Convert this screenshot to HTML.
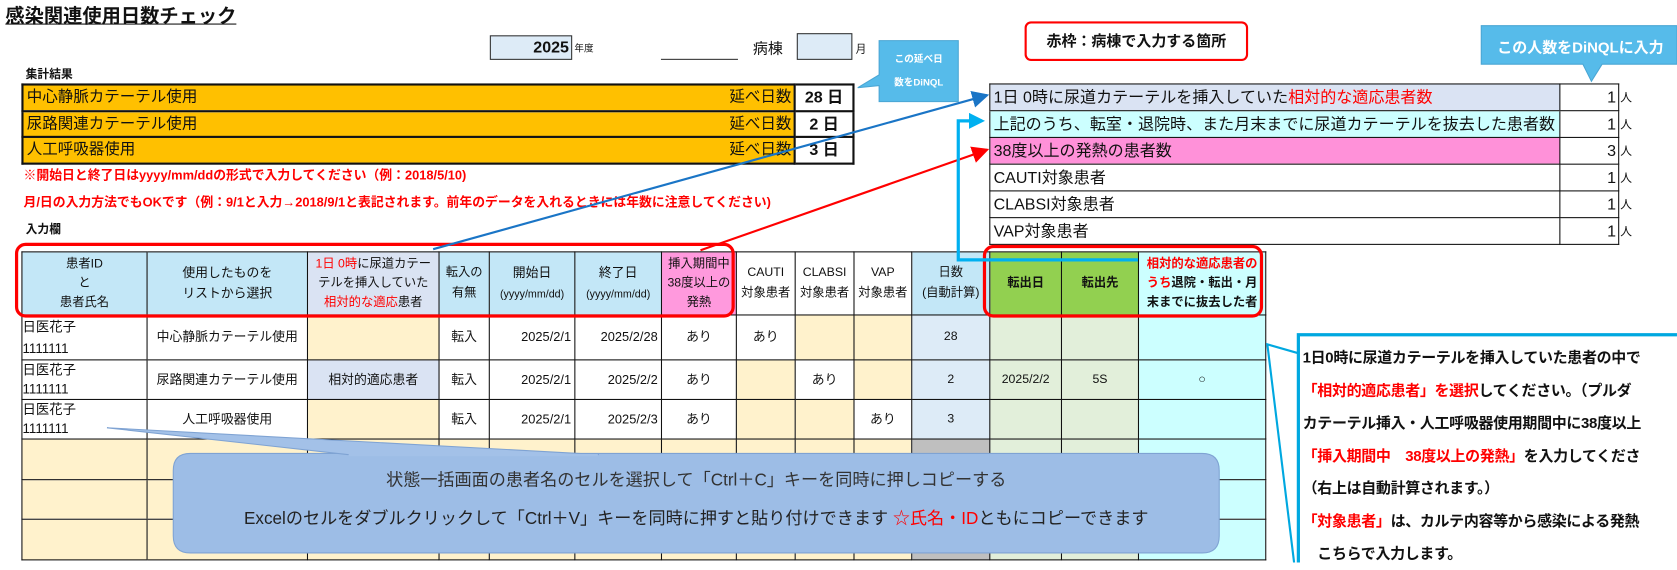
<!DOCTYPE html>
<html><head><meta charset="utf-8">
<style>
*{margin:0;padding:0;box-sizing:border-box}
html,body{width:1677px;height:562px;overflow:hidden;background:#fff}
#w{position:absolute;left:0;top:0;width:1568px;height:526px;transform:scale(1.0695);transform-origin:0 0;font-family:"Liberation Sans","Noto Sans CJK JP",sans-serif;color:#111}
.a{position:absolute;white-space:nowrap}
.r{color:#f00}
table{border-collapse:collapse;position:absolute;table-layout:fixed}
td{border:1px solid #111;text-align:center;vertical-align:middle;font-size:11.5px;line-height:19px;overflow:hidden;white-space:nowrap;padding:0}
.hb{background:#c3e7f7}.lv{background:#dae3f3}.pk{background:#ff99dd}.bg{background:#fff2cc}.lb{background:#ddebf7}.gr{background:#bfbfbf}.gn{background:#92d050;font-weight:bold}.lg{background:#e2efda}.cy{background:#ccffff}
.sum td{font-size:15px;text-align:left;padding-left:3px;height:25px}
.nm{text-align:left;border-right:1px dotted #111 !important;font-size:12.5px}
</style></head><body><div id="w">
<div class="a" style="left:5px;top:1px;font-size:18px;font-weight:bold;text-decoration:underline">感染関連使用日数チェック</div>
<div class="a" style="left:458px;top:33px;width:77px;height:23px;background:#ddebf7;border:1px solid #333;font-size:15px;font-weight:bold;text-align:right;padding-right:2px;line-height:21px">2025</div>
<div class="a" style="left:537px;top:38px;font-size:9px">年度</div>
<div class="a" style="left:618px;top:55px;width:72px;border-top:1px solid #333"></div>
<div class="a" style="left:704px;top:35px;font-size:14px">病棟</div>
<div class="a" style="left:745px;top:31px;width:52px;height:25px;background:#ddebf7;border:1px solid #333"></div>
<div class="a" style="left:800px;top:37px;font-size:10px">月</div>
<svg class="a" style="left:790px;top:30px" width="120" height="70"><polygon points="32,8 106,8 106,65 32,65 32,50 12,52 32,40" fill="#56bbea" stroke="#4aa6d4"/><text x="69" y="28" font-size="9" fill="#fff" font-weight="bold" text-anchor="middle" font-family="Liberation Sans,Noto Sans CJK JP,sans-serif">この延べ日</text><text x="69" y="50" font-size="9" fill="#fff" font-weight="bold" text-anchor="middle" font-family="Liberation Sans,Noto Sans CJK JP,sans-serif">数をDiNQL</text></svg>
<div class="a" style="left:24px;top:61px;font-size:11px;font-weight:bold">集計結果</div>
<table style="left:20px;top:78px;width:777px;border:2px solid #111">
<colgroup><col style="width:722px"><col style="width:55px"></colgroup>
<tr><td style="background:#ffc000;text-align:left;padding-left:3px;font-size:14.5px;height:25px;border:2px solid #111">中心静脈カテーテル使用<span style="float:right;padding-right:2px">延べ日数</span></td><td style="font-size:15px;font-weight:bold;border:2px solid #111">28 日</td></tr>
<tr><td style="background:#ffc000;text-align:left;padding-left:3px;font-size:14.5px;height:24px;border:2px solid #111">尿路関連カテーテル使用<span style="float:right;padding-right:2px">延べ日数</span></td><td style="font-size:15px;font-weight:bold;border:2px solid #111">2 日</td></tr>
<tr><td style="background:#ffc000;text-align:left;padding-left:3px;font-size:14.5px;height:25px;border:2px solid #111">人工呼吸器使用<span style="float:right;padding-right:2px">延べ日数</span></td><td style="font-size:15px;font-weight:bold;border:2px solid #111">3 日</td></tr>
</table>
<div class="a r" style="left:22px;top:155px;font-size:12px;font-weight:bold">※開始日と終了日はyyyy/mm/ddの形式で入力してください（例：2018/5/10)</div>
<div class="a r" style="left:22px;top:180px;font-size:12px;font-weight:bold">月/日の入力方法でもOKです（例：9/1と入力→2018/9/1と表記されます。前年のデータを入れるときには年数に注意してください)</div>
<div class="a" style="left:24px;top:206px;font-size:11px;font-weight:bold">入力欄</div>

<div class="a" style="left:958px;top:20px;width:209px;height:37px;border:2px solid #f00;border-radius:6px;font-size:14px;font-weight:bold;text-align:center;line-height:33px">赤枠：病棟で入力する箇所</div>
<svg class="a" style="left:1380px;top:20px" width="188" height="60"><polygon points="5,4 188,4 188,40 118,40 108,56 100,40 5,40" fill="#56bbea" stroke="#4aa6d4"/><text x="20" y="29" font-size="14" fill="#fff" font-weight="bold" font-family="Liberation Sans,Noto Sans CJK JP,sans-serif">この人数をDiNQLに入力</text></svg>

<table class="sum" style="left:925px;top:78px;width:588px">
<colgroup><col style="width:533px"><col style="width:55px"></colgroup>
<tr><td class="lv" style="border-bottom:1px dotted #111">1日 0時に尿道カテーテルを挿入していた<span class="r">相対的な適応患者数</span></td><td style="text-align:right;padding-right:2px">1</td></tr>
<tr><td class="cy">上記のうち、転室・退院時、また月末までに尿道カテーテルを抜去した患者数</td><td style="text-align:right;padding-right:2px">1</td></tr>
<tr><td style="background:#ff91d9">38度以上の発熱の患者数</td><td style="text-align:right;padding-right:2px">3</td></tr>
<tr><td>CAUTI対象患者</td><td style="text-align:right;padding-right:2px">1</td></tr>
<tr><td>CLABSI対象患者</td><td style="text-align:right;padding-right:2px">1</td></tr>
<tr><td>VAP対象患者</td><td style="text-align:right;padding-right:2px">1</td></tr>
</table>
<div class="a" style="left:1515px;top:80px;font-size:11px;line-height:25px">人<br>人<br>人<br>人<br>人<br>人</div>

<table style="left:20px;top:235px;width:1163px">
<colgroup><col style="width:117px"><col style="width:150px"><col style="width:123px"><col style="width:47px"><col style="width:80px"><col style="width:81px"><col style="width:70px"><col style="width:55px"><col style="width:55px"><col style="width:54px"><col style="width:73px"><col style="width:67px"><col style="width:72px"><col style="width:119px"></colgroup>
<tr style="height:59px">
<td class="hb" style="border-right:1px dotted #111;line-height:18px">患者ID<br>と<br>患者氏名</td>
<td class="hb" style="font-size:12px">使用したものを<br>リストから選択</td>
<td class="lv" style="line-height:18px"><span class="r">1日 0時</span>に尿道カテー<br>テルを挿入していた<br><span class="r">相対的な適応</span>患者</td>
<td class="hb">転入の<br>有無</td>
<td class="hb" style="font-size:10px"><span style="font-size:12px">開始日</span><br>(yyyy/mm/dd)</td>
<td class="hb" style="font-size:10px"><span style="font-size:12px">終了日</span><br>(yyyy/mm/dd)</td>
<td class="pk" style="line-height:18px">挿入期間中<br>38度以上の<br>発熱</td>
<td>CAUTI<br>対象患者</td>
<td>CLABSI<br>対象患者</td>
<td>VAP<br>対象患者</td>
<td class="hb">日数<br>(自動計算)</td>
<td class="gn">転出日</td>
<td class="gn">転出先</td>
<td class="cy" style="font-weight:bold;line-height:18px"><span class="r">相対的な適応患者の<br>うち</span>退院・転出・月<br>末までに抜去した者</td>
</tr>
<tr style="height:42px"><td class="nm" style="line-height:20px">日医花子<br>1111111</td><td style="font-size:12px">中心静脈カテーテル使用</td><td class="bg"></td><td style="font-size:12px">転入</td><td style="text-align:right;padding-right:3px;font-size:12px">2025/2/1</td><td style="text-align:right;padding-right:3px;font-size:12px">2025/2/28</td><td style="font-size:12px">あり</td><td style="font-size:12px">あり</td><td class="bg"></td><td class="bg"></td><td class="lb">28</td><td class="lg"></td><td class="lg"></td><td class="cy"></td></tr>
<tr style="height:37px"><td class="nm" style="line-height:18px">日医花子<br>1111111</td><td style="font-size:12px">尿路関連カテーテル使用</td><td class="lv" style="font-size:12px">相対的適応患者</td><td style="font-size:12px">転入</td><td style="text-align:right;padding-right:3px;font-size:12px">2025/2/1</td><td style="text-align:right;padding-right:3px;font-size:12px">2025/2/2</td><td style="font-size:12px">あり</td><td class="bg"></td><td style="font-size:12px">あり</td><td class="bg"></td><td class="lb">2</td><td class="lg">2025/2/2</td><td class="lg">5S</td><td class="cy">○</td></tr>
<tr style="height:37px"><td class="nm" style="line-height:18px">日医花子<br>1111111</td><td style="font-size:12px">人工呼吸器使用</td><td class="bg"></td><td style="font-size:12px">転入</td><td style="text-align:right;padding-right:3px;font-size:12px">2025/2/1</td><td style="text-align:right;padding-right:3px;font-size:12px">2025/2/3</td><td style="font-size:12px">あり</td><td class="bg"></td><td class="bg"></td><td style="font-size:12px">あり</td><td class="lb">3</td><td class="lg"></td><td class="lg"></td><td class="cy"></td></tr>
<tr style="height:38px"><td class="bg" style="border-right:1px dotted #111"></td><td class="bg"></td><td class="bg"></td><td class="bg"></td><td class="bg"></td><td class="bg"></td><td class="bg"></td><td class="bg"></td><td class="bg"></td><td class="bg"></td><td class="gr"></td><td class="lg"></td><td class="lg"></td><td class="cy"></td></tr>
<tr style="height:37px"><td class="bg" style="border-right:1px dotted #111"></td><td class="bg"></td><td class="bg"></td><td class="bg"></td><td class="bg"></td><td class="bg"></td><td class="bg"></td><td class="bg"></td><td class="bg"></td><td class="bg"></td><td class="gr"></td><td class="lg"></td><td class="lg"></td><td class="cy"></td></tr>
<tr style="height:38px"><td class="bg" style="border-right:1px dotted #111"></td><td class="bg"></td><td class="bg"></td><td class="bg"></td><td class="bg"></td><td class="bg"></td><td class="bg"></td><td class="bg"></td><td class="bg"></td><td class="bg"></td><td class="gr"></td><td class="lg"></td><td class="lg"></td><td class="cy"></td></tr>
</table>

<div class="a" style="left:14px;top:227px;width:673px;height:70px;border:3px solid #f00;border-radius:10px"></div>
<div class="a" style="left:919px;top:229px;width:262px;height:68px;border:3px solid #f00;border-radius:10px"></div>

<svg class="a" style="left:0;top:0" width="1568" height="526">
<defs>
<marker id="mb" markerWidth="8" markerHeight="8" refX="7" refY="4" orient="auto"><path d="M0,0 L8,4 L0,8z" fill="#1a75c6"/></marker>
<marker id="mr" markerWidth="8" markerHeight="8" refX="7" refY="4" orient="auto"><path d="M0,0 L8,4 L0,8z" fill="#f00"/></marker>
<marker id="mc" markerWidth="5" markerHeight="5" refX="4" refY="2.5" orient="auto"><path d="M0,0 L5,2.5 L0,5z" fill="#00b0f0"/></marker>
</defs>
<line x1="405" y1="233" x2="923" y2="89" stroke="#1a75c6" stroke-width="2" marker-end="url(#mb)"/>
<line x1="655" y1="234" x2="923" y2="140" stroke="#f00" stroke-width="2" marker-end="url(#mr)"/>
<polyline points="1064,243 896,243 896,113 918,113" fill="none" stroke="#00b0f0" stroke-width="3" marker-end="url(#mc)"/>
<path d="M162,440 Q162,424 178,424 L1124,424 Q1140,424 1140,440 L1140,501 Q1140,517 1124,517 L178,517 Q162,517 162,501 Z" fill="#9dbde6" stroke="#7fa3d3"/>
<polygon points="325,425 100,400 560,425" fill="#a3c1e8" stroke="#7fa3d3"/>
<line x1="326" y1="425.5" x2="559" y2="425.5" stroke="#a3c1e8" stroke-width="2"/>
<polyline points="1213,330 1185,322 1210,526" fill="none" stroke="#00a8e0" stroke-width="2"/>
<polyline points="1214,526 1214,313 1568,313" fill="none" stroke="#00a8e0" stroke-width="3"/>
</svg>
<div class="a" style="left:162px;top:435px;width:978px;text-align:center;font-size:16px;color:#333">状態一括画面の患者名のセルを選択して「Ctrl＋C」キーを同時に押しコピーする</div>
<div class="a" style="left:162px;top:471px;width:978px;text-align:center;font-size:16px;color:#222">Excelのセルをダブルクリックして「Ctrl＋V」キーを同時に押すと貼り付けできます <span class="r">☆氏名・ID</span>ともにコピーできます</div>
<div class="a" style="left:1218px;top:319px;font-size:14px;font-weight:bold;line-height:30.5px;letter-spacing:-0.3px">1日0時に尿道カテーテルを挿入していた患者の中で<br><span class="r">「相対的適応患者」を選択</span>してください。（プルダ<br>カテーテル挿入・人工呼吸器使用期間中に38度以上<br><span class="r">「挿入期間中　38度以上の発熱」</span>を入力してくださ<br>（右上は自動計算されます。）<br><span class="r">「対象患者」</span>は、カルテ内容等から感染による発熱<br>　こちらで入力します。</div>
</div></body></html>
